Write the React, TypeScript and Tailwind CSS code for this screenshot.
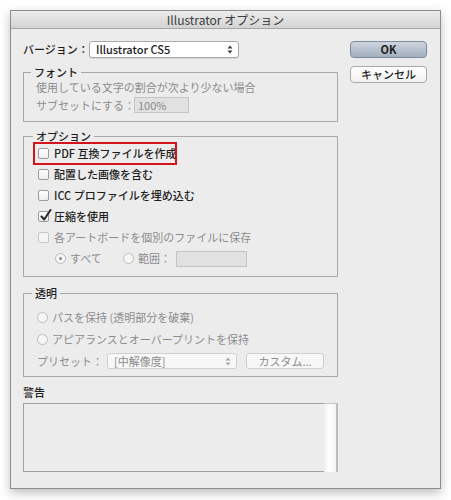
import React from "react";

const FONT = "font-['Noto_Sans_CJK_JP','Noto_Sans',sans-serif]";

function Checkbox({ checked = false, disabled = false }: { checked?: boolean; disabled?: boolean }) {
  return (
    <span
      className={`relative inline-block h-[11px] w-[11px] shrink-0 rounded-[2px] border ${
        disabled ? "border-[#c8c8c8] bg-[#f4f4f4]" : "border-[#9b9b9b] bg-gradient-to-b from-white to-[#ededed]"
      }`}
    >
      {checked && (
        <svg className="absolute -top-[3px] left-[1px]" width="12" height="13" viewBox="0 0 12 13">
          <path d="M1.5 7.5 L4.2 10.5 L10.5 1" fill="none" stroke="#2a2a2a" strokeWidth="2" strokeLinecap="round" strokeLinejoin="round" />
        </svg>
      )}
    </span>
  );
}

function Radio({ checked = false, disabled = false }: { checked?: boolean; disabled?: boolean }) {
  return (
    <span
      className={`flex h-[11px] w-[11px] shrink-0 items-center justify-center rounded-full border ${
        disabled ? "border-[#bdbdbd] bg-[#f6f6f6]" : "border-[#9b9b9b] bg-white"
      }`}
    >
      {checked && <span className="h-[3px] w-[3px] rounded-full bg-[#8a8a8a]" />}
    </span>
  );
}

function SelectArrows({ color = "#3a3a3a" }: { color?: string }) {
  return (
    <svg width="6" height="9" viewBox="0 0 6 9">
      <path d="M0.5 3.5 L3 0.5 L5.5 3.5 Z" fill={color} />
      <path d="M0.5 5.5 L3 8.5 L5.5 5.5 Z" fill={color} />
    </svg>
  );
}

function Group({ title, pl, children, className = "" }: { title: string; pl: string; children: React.ReactNode; className?: string }) {
  return (
    <fieldset className={`w-[315px] border border-[#a9a9a9] ${pl} ${className}`}>
      <legend className="ml-[-5px] h-[14px] px-[3px] text-[11px] leading-[14px] font-medium text-[#1e1e1e]">{title}</legend>
      {children}
    </fieldset>
  );
}

export default function App() {
  return (
    <div className={`h-[500px] w-[451px] bg-white px-[10px] pt-[10px] ${FONT}`}>
      <div className="flex h-[479px] w-[431px] flex-col border border-[#8c8c8c] bg-[#ececec] shadow-[0_4px_10px_rgba(0,0,0,0.25)]">
        {/* title bar */}
        <div className="flex h-[18px] shrink-0 items-center justify-center border-b border-[#a6a6a6] bg-gradient-to-b from-[#ececec] to-[#d3d3d3] text-[12px] text-[#3c3c3c]">
          Illustrator オプション
        </div>

        <div className="flex gap-[12px] pl-[12px] pt-[12px]">
          {/* left column */}
          <div className="flex w-[315px] flex-col">
            <div className="flex h-[17px] items-center">
              <span className="w-[66px] shrink-0 whitespace-nowrap text-[11px] font-medium text-[#1e1e1e]">バージョン：</span>
              <div className="flex h-[17px] w-[150px] items-center justify-between rounded-[3px] border border-[#a8a8a8] bg-white pl-[6px] pr-[5px] shadow-[0_1px_0_rgba(0,0,0,0.08)]">
                <span className="text-[11px] font-medium text-[#1e1e1e]">Illustrator CS5</span>
                <SelectArrows />
              </div>
            </div>

            <Group title="フォント" pl="pl-[12px]" className="mt-[7px] pb-[8px]">
              <div className="flex h-[16px] items-center whitespace-nowrap text-[11px] text-[#8c8c8c]">使用している文字の割合が次より少ない場合</div>
              <div className="mt-[2px] flex h-[16px] items-center">
                <span className="w-[98px] shrink-0 whitespace-nowrap text-[11px] text-[#8c8c8c]">サブセットにする：</span>
                <div className="flex h-[16px] w-[55px] items-center border border-[#c4c4c4] bg-[#e1e1e1] pl-[3px] text-[11px] text-[#8c8c8c]">
                  100%
                </div>
              </div>
            </Group>

            <Group title="オプション" pl="pl-[14px]" className="mt-[7px] pb-[7px]">
              <div className="relative flex h-[21px] items-center gap-[5px] text-[11px] font-medium text-[#1e1e1e]">
                <Checkbox />
                <span>PDF 互換ファイルを作成</span>
                <span className="absolute left-[-5px] top-[-1px] h-[23px] w-[144px] border-2 border-[#d4131b]" />
              </div>
              <div className="flex h-[21px] items-center gap-[5px] text-[11px] font-medium text-[#1e1e1e]">
                <Checkbox />
                <span>配置した画像を含む</span>
              </div>
              <div className="flex h-[21px] items-center gap-[5px] text-[11px] font-medium text-[#1e1e1e]">
                <Checkbox />
                <span>ICC プロファイルを埋め込む</span>
              </div>
              <div className="flex h-[21px] items-center gap-[5px] text-[11px] font-medium text-[#1e1e1e]">
                <Checkbox checked />
                <span>圧縮を使用</span>
              </div>
              <div className="flex h-[21px] items-center gap-[5px] text-[11px] text-[#8c8c8c]">
                <Checkbox disabled />
                <span>各アートボードを個別のファイルに保存</span>
              </div>
              <div className="flex h-[21px] items-center pl-[17px] text-[11px] text-[#8c8c8c]">
                <Radio checked disabled />
                <span className="ml-[4px] w-[53px] shrink-0">すべて</span>
                <Radio disabled />
                <span className="ml-[4px] w-[38px] shrink-0 whitespace-nowrap">範囲：</span>
                <div className="h-[16px] w-[71px] border border-[#c4c4c4] bg-[#e1e1e1]" />
              </div>
            </Group>

            <Group title="透明" pl="pl-[13px]" className="mt-[9px] pb-[4px]">
              <div className="mt-[6px] flex h-[22px] items-center gap-[4px] text-[11px] text-[#8c8c8c]">
                <Radio disabled />
                <span>パスを保持 (透明部分を破棄)</span>
              </div>
              <div className="flex h-[22px] items-center gap-[4px] text-[11px] text-[#8c8c8c]">
                <Radio disabled />
                <span>アピアランスとオーバープリントを保持</span>
              </div>
              <div className="flex h-[22px] items-center text-[11px] text-[#8c8c8c]">
                <span className="w-[70px] shrink-0 whitespace-nowrap">プリセット：</span>
                <div className="flex h-[16px] w-[130px] items-center justify-between rounded-[3px] border border-[#cfcfcf] bg-[#f7f7f7] pl-[6px] pr-[5px]">
                  <span className="text-[#8c8c8c]">[中解像度]</span>
                  <SelectArrows color="#a8a8a8" />
                </div>
                <div className="ml-[9px] flex h-[16px] w-[78px] items-center justify-center rounded-[3px] border border-[#cfcfcf] bg-[#f7f7f7]">
                  カスタム...
                </div>
              </div>
            </Group>

            <div className="mt-[8px] flex h-[14px] items-center text-[11px] font-medium text-[#1e1e1e]">警告</div>
            <div className="mt-[4px] flex h-[69px] w-[315px]">
              <div className="flex-1 border border-[#a0a0a0] border-r-0 bg-[#ececec]" />
              <div className="w-[12px] border-t border-[#c4c4c4] bg-gradient-to-r from-[#f0f0f0] via-white to-[#f3f3f3]" />
              <div className="w-[2px] bg-[#bdbdbd]" />
            </div>
          </div>

          {/* right column */}
          <div className="flex w-[77px] flex-col gap-[8px]">
            <div className="flex h-[17px] items-center justify-center rounded-[4px] border border-[#7f8a99] bg-gradient-to-b from-[#cdd5df] to-[#a3afbe] text-[11px] font-bold text-[#1e1e1e]">
              OK
            </div>
            <div className="flex h-[17px] items-center justify-center rounded-[4px] border border-[#a8a8a8] bg-gradient-to-b from-white to-[#f1f1f1] text-[11px] font-medium text-[#1e1e1e]">
              キャンセル
            </div>
          </div>
        </div>
      </div>
    </div>
  );
}
